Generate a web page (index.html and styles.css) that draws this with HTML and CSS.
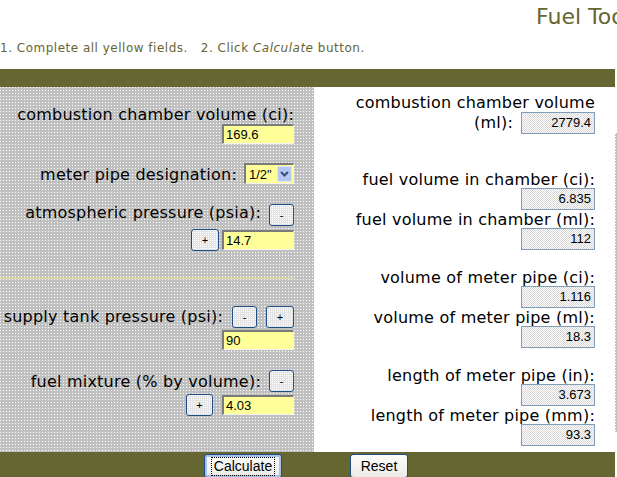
FILE: index.html
```html
<!DOCTYPE html>
<html>
<head>
<meta charset="utf-8">
<title>Fuel Tool</title>
<link rel="stylesheet" href="styles.css">
</head>
<body>
<div class="page">
  <header class="header">
    <h1 class="title">Fuel Tool Calculator</h1>
    <p class="steps">1. Complete all yellow fields.   2. Click <em>Calculate</em> button.</p>
  </header>
  <div class="bar"></div>
  <div class="main">
    <section class="inputs">
      <div class="label">combustion chamber volume (ci):</div>
      <div class="field f-1">169.6</div>

      <div class="row r-2">
        <div class="label lm-3">meter pipe designation:</div>
        <div class="select">
          <span class="select-val">1/2"</span>
          <span class="select-arrow"><svg width="9" height="6" viewBox="0 0 9 6"><path d="M1 1 L4.5 4.5 L8 1" fill="none" stroke="#3b4f7c" stroke-width="2"/></svg></span>
        </div>
      </div>

      <div class="row r-3">
        <div class="label">atmospheric pressure (psia):</div>
        <button class="btn btn-minus g-8">-</button>
      </div>
      <div class="row r-3b">
        <button class="btn btn-plus">+</button>
        <div class="field fm-1 g-3">14.7</div>
      </div>

      <div class="divider"></div>

      <div class="row r-4">
        <div class="label lm-2">supply tank pressure (psi):</div>
        <button class="btn btn-minus g-9">-</button>
        <button class="btn btn-plus g-9">+</button>
      </div>
      <div class="field f-4b">90</div>

      <div class="row r-5">
        <div class="label lm-3">fuel mixture (% by volume):</div>
        <button class="btn btn-minus g-8">-</button>
      </div>
      <div class="row r-5b">
        <button class="btn btn-plus btn-plus-s">+</button>
        <div class="field fm-1 g-9">4.03</div>
      </div>
    </section>

    <section class="outputs">
      <div class="label">combustion chamber volume</div>
      <div class="row o-row1">
        <div class="label lm-2">(ml):</div>
        <div class="out g-8">2779.4</div>
      </div>

      <div class="label o-gap-l">fuel volume in chamber (ci):</div>
      <div class="out">6.835</div>
      <div class="label o-gap-s">fuel volume in chamber (ml):</div>
      <div class="out">112</div>

      <div class="label o-gap-m">volume of meter pipe (ci):</div>
      <div class="out">1.116</div>
      <div class="label o-gap-s">volume of meter pipe (ml):</div>
      <div class="out">18.3</div>

      <div class="label o-gap-m">length of meter pipe (in):</div>
      <div class="out">3.673</div>
      <div class="label o-gap-s">length of meter pipe (mm):</div>
      <div class="out">93.3</div>
    </section>
    <div class="edge"></div>
  </div>
  <div class="bar bar-bottom">
    <button class="big-btn calc"><span class="focus">Calculate</span></button>
    <button class="big-btn reset">Reset</button>
  </div>
</div>
</body>
</html>
```

FILE: styles.css
```css
body {
  margin: 0;
  overflow: hidden;
  background: #fff;
  font-family: "DejaVu Sans", Verdana, sans-serif;
  color: #000;
}

.page {
  width: 617px;
}

.header {
  height: 69px;
  box-sizing: border-box;
  padding-top: 4px;
  overflow: hidden;
}

.title {
  margin: 0 0 0 536px;
  font-size: 22px;
  line-height: 26px;
  font-weight: normal;
  color: #666633;
  white-space: nowrap;
}

.steps {
  margin: 11px 0 0;
  font-size: 12px;
  line-height: 14px;
  letter-spacing: 0.5px;
  color: #666633;
  white-space: pre;
}

.bar {
  width: 615px;
  height: 18px;
  background: #666633;
}

.main {
  display: flex;
  height: 365px;
}

.inputs {
  width: 314px;
  box-sizing: border-box;
  padding: 19px 20px 0 0;
  display: flex;
  flex-direction: column;
  align-items: flex-end;
  background-color: #c0c0c0;
  background-image: conic-gradient(at 1px 1px, transparent 75%, #fff 0);
  background-size: 3px 3px;
}

.outputs {
  width: 301px;
  box-sizing: border-box;
  padding: 7px 20px 0 0;
  display: flex;
  flex-direction: column;
  align-items: flex-end;
  background: #fff;
}

.edge {
  width: 2px;
  margin-top: 46px;
  height: 299px;
  background-color: #c0c0c0;
  background-image: conic-gradient(at 1px 1px, transparent 75%, #fff 0);
  background-size: 3px 3px;
}

.row {
  display: flex;
  justify-content: flex-end;
  align-items: flex-start;
}

.label {
  font-size: 16px;
  line-height: 17px;
  letter-spacing: 0.22px;
  white-space: nowrap;
}

.lm-2 { margin-top: 2px; }
.lm-3 { margin-top: 3px; }
.g-3 { margin-left: 3px; }
.g-8 { margin-left: 8px; }
.g-9 { margin-left: 9px; }
.fm-1 { margin-top: 1px; }

.field {
  width: 72px;
  height: 20px;
  box-sizing: border-box;
  padding: 0 2px;
  background: #ffff99;
  border-style: solid;
  border-width: 2px 1px 1px 2px;
  border-color: #7b7b7b #f2f2f2 #f2f2f2 #7b7b7b;
  font: 13px/17px "Liberation Sans", Arial, sans-serif;
  text-align: left;
}

.f-1 { margin-top: 1px; }
.f-4b { margin-top: 2px; }

.r-2 { margin-top: 19px; }
.r-3 { margin-top: 20px; }
.r-3b { margin-top: 3px; }
.r-4 { margin-top: 27px; }
.r-5 { margin-top: 20px; }
.r-5b { margin-top: 2px; }

.divider {
  align-self: stretch;
  margin-top: 26px;
  height: 2px;
  background: #d6d6a3;
}

.select {
  margin-left: 7px;
  width: 50px;
  height: 21px;
  box-sizing: border-box;
  display: flex;
  align-items: center;
  background: #ffff99;
  border-style: solid;
  border-width: 2px 1px 1px 2px;
  border-color: #7b7b7b #f2f2f2 #f2f2f2 #7b7b7b;
  font: 13px "Liberation Sans", Arial, sans-serif;
}

.select-val {
  padding-left: 3px;
}

.select-arrow {
  margin-left: auto;
  margin-right: 1px;
  width: 15px;
  height: 16px;
  box-sizing: border-box;
  display: flex;
  align-items: center;
  justify-content: center;
  background: #b6c8f2;
  border: 1px solid #dfe7fb;
  border-radius: 1px;
}

.btn {
  height: 22px;
  box-sizing: border-box;
  padding: 0;
  border: 1px solid #1e4e84;
  border-radius: 3px;
  background-color: #e4e4e4;
  background-image: conic-gradient(at 1px 1px, transparent 75%, #fff 0);
  background-size: 2px 2px;
  font: 11px "Liberation Sans", Arial, sans-serif;
  color: #000;
}

.btn-minus { width: 25px; }
.btn-plus { width: 28px; }
.btn-plus-s { width: 27px; }

.out {
  width: 74px;
  height: 22px;
  box-sizing: border-box;
  padding-right: 3px;
  border: 1px solid #7f9db9;
  background: repeating-conic-gradient(#d6d6d6 0 25%, #fff 0 50%) 0 0 / 2px 2px;
  font: 13px/20px "Liberation Sans", Arial, sans-serif;
  text-align: right;
}

.o-row1 { margin-top: 1px; }
.o-gap-l { margin-top: 37px; }
.o-gap-m { margin-top: 19px; }
.o-gap-s { margin-top: 1px; }

.bar-bottom {
  height: 25px;
  display: flex;
  align-items: flex-start;
}

.big-btn {
  margin-top: 2px;
  height: 24px;
  box-sizing: border-box;
  padding: 0;
  border: 1px solid #1e4e84;
  border-radius: 3px;
  background: linear-gradient(#fdfdfb, #ecebe6);
  font: 14px "Liberation Sans", Arial, sans-serif;
  color: #000;
}

.calc {
  margin-left: 204px;
  width: 78px;
  box-shadow: inset 0 0 0 2px #a8c2ee;
}

.focus {
  display: inline-block;
  padding: 1px 2px;
  line-height: 15px;
  border: 1px dotted #000;
}

.reset {
  margin-left: 68px;
  width: 58px;
}
```
